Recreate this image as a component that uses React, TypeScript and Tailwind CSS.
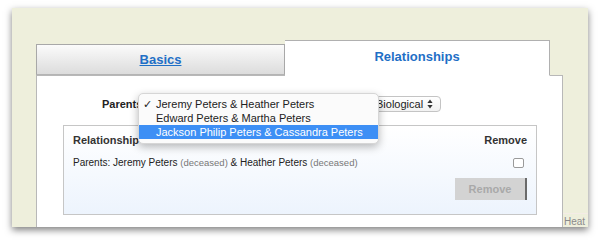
import React from "react";

const parentOptions = [
  "Jeremy Peters & Heather Peters",
  "Edward Peters & Martha Peters",
  "Jackson Philip Peters & Cassandra Peters",
];

function UpDownArrows() {
  return (
    <svg width="6" height="10" viewBox="0 0 6 10" className="shrink-0">
      <path d="M3 0.5 L5.6 4 H0.4 Z" fill="#333" />
      <path d="M3 9.5 L5.6 6 H0.4 Z" fill="#333" />
    </svg>
  );
}

function ParentsPopup() {
  return (
    <div className="absolute left-[101px] top-[17px] z-10 w-[241px] h-[51px] bg-[#fbfbfb] border border-[#d6d6d6] rounded-[5px] shadow-[0_3px_9px_rgba(0,0,0,0.28)] py-[3px] text-[11px] leading-[14px] text-[#222]">
      {parentOptions.map((name, i) => (
        <div
          key={name}
          className={
            i === 2
              ? "relative h-[14px] pl-[17px] bg-[#3d8ff5] text-white"
              : "relative h-[14px] pl-[17px]"
          }
        >
          {i === 0 && <span className="absolute left-[4px] top-0 text-[11px]">✓</span>}
          {name}
        </div>
      ))}
    </div>
  );
}

export default function App() {
  return (
    <div className="w-[600px] h-[243px] bg-white overflow-hidden pt-[8px] pl-[12px] font-['Liberation_Sans',Arial,sans-serif]">
      <div className="flex w-[576px] h-[219px] bg-[#eeefdc] shadow-[0_3px_7px_rgba(0,0,0,0.5)]">
        <div className="w-[24px] shrink-0" />

        <div className="flex flex-col w-[527px] shrink-0 pt-[32px]">
          {/* tabs */}
          <div className="flex items-end h-[35px]">
            <div className="w-[249px] h-[31px] flex items-center justify-center bg-gradient-to-b from-[#fbfbfb] to-[#dcdcdc] border border-[#a8a8a8] border-b-[#b4b4b4]">
              <span className="text-[13px] font-bold text-[#1f6fc6] underline">Basics</span>
            </div>
            <div className="relative z-[1] -mb-px w-[265px] h-[36px] flex items-center justify-center pb-[2px] bg-white border border-[#b0b0b0] border-b-white border-l-0">
              <span className="text-[13px] font-bold text-[#1f6fc6]">Relationships</span>
            </div>
          </div>

          {/* content */}
          <div className="relative flex-1 bg-white border-l border-r border-t border-[#b8b8b8]">
            <ParentsPopup />

            <div className="flex items-center h-[16px] mt-[20px] pl-[65px]">
              <span className="text-[11px] font-bold text-[#222] w-[40px]">Parents</span>
              <div className="w-[222px]" />
              <div className="flex items-center justify-between ml-[5px] w-[72px] h-[16px] pl-[6px] pr-[7px] rounded-[4px] border border-[#c4c4c4] bg-gradient-to-b from-white to-[#f2f2f2] text-[11px] text-[#222]">
                <span>Biological</span>
                <UpDownArrows />
              </div>
            </div>

            <div className="mt-[13px] ml-[26px] w-[474px] h-[90px] border border-[#c6c6c6] bg-gradient-to-b from-white to-[#edf4fd] px-[9px]">
              <div className="flex items-center justify-between h-[13px] mt-[8px] text-[11px] font-bold text-[#333]">
                <span>Relationship</span>
                <span>Remove</span>
              </div>
              <div className="flex items-center justify-between h-[13px] mt-[9px] text-[10px] text-[#222]">
                <span>
                  Parents: Jeremy Peters <span className="text-[9.5px] text-[#777]">(deceased)</span> &amp; Heather Peters{" "}
                  <span className="text-[9.5px] text-[#777]">(deceased)</span>
                </span>
                <span className="w-[11px] h-[10px] mr-[3px] rounded-[2px] border border-[#9a9a9a] bg-white" />
              </div>
              <div className="flex justify-end mt-[9px]">
                <div className="w-[72px] h-[22px] flex items-center justify-center bg-[#d3d3d3] border-r-2 border-[#6a6a6a] text-[11px] font-bold text-[#a9a9a9]">
                  Remove
                </div>
              </div>
            </div>
          </div>
        </div>

        <div className="flex flex-col justify-end w-[25px] overflow-hidden">
          <div className="border-t border-[#f4ece6] pt-[2px] text-[10px] leading-[11px] text-[#8a8a8a] whitespace-nowrap pl-[1px]">
            Heat
          </div>
        </div>
      </div>
    </div>
  );
}
